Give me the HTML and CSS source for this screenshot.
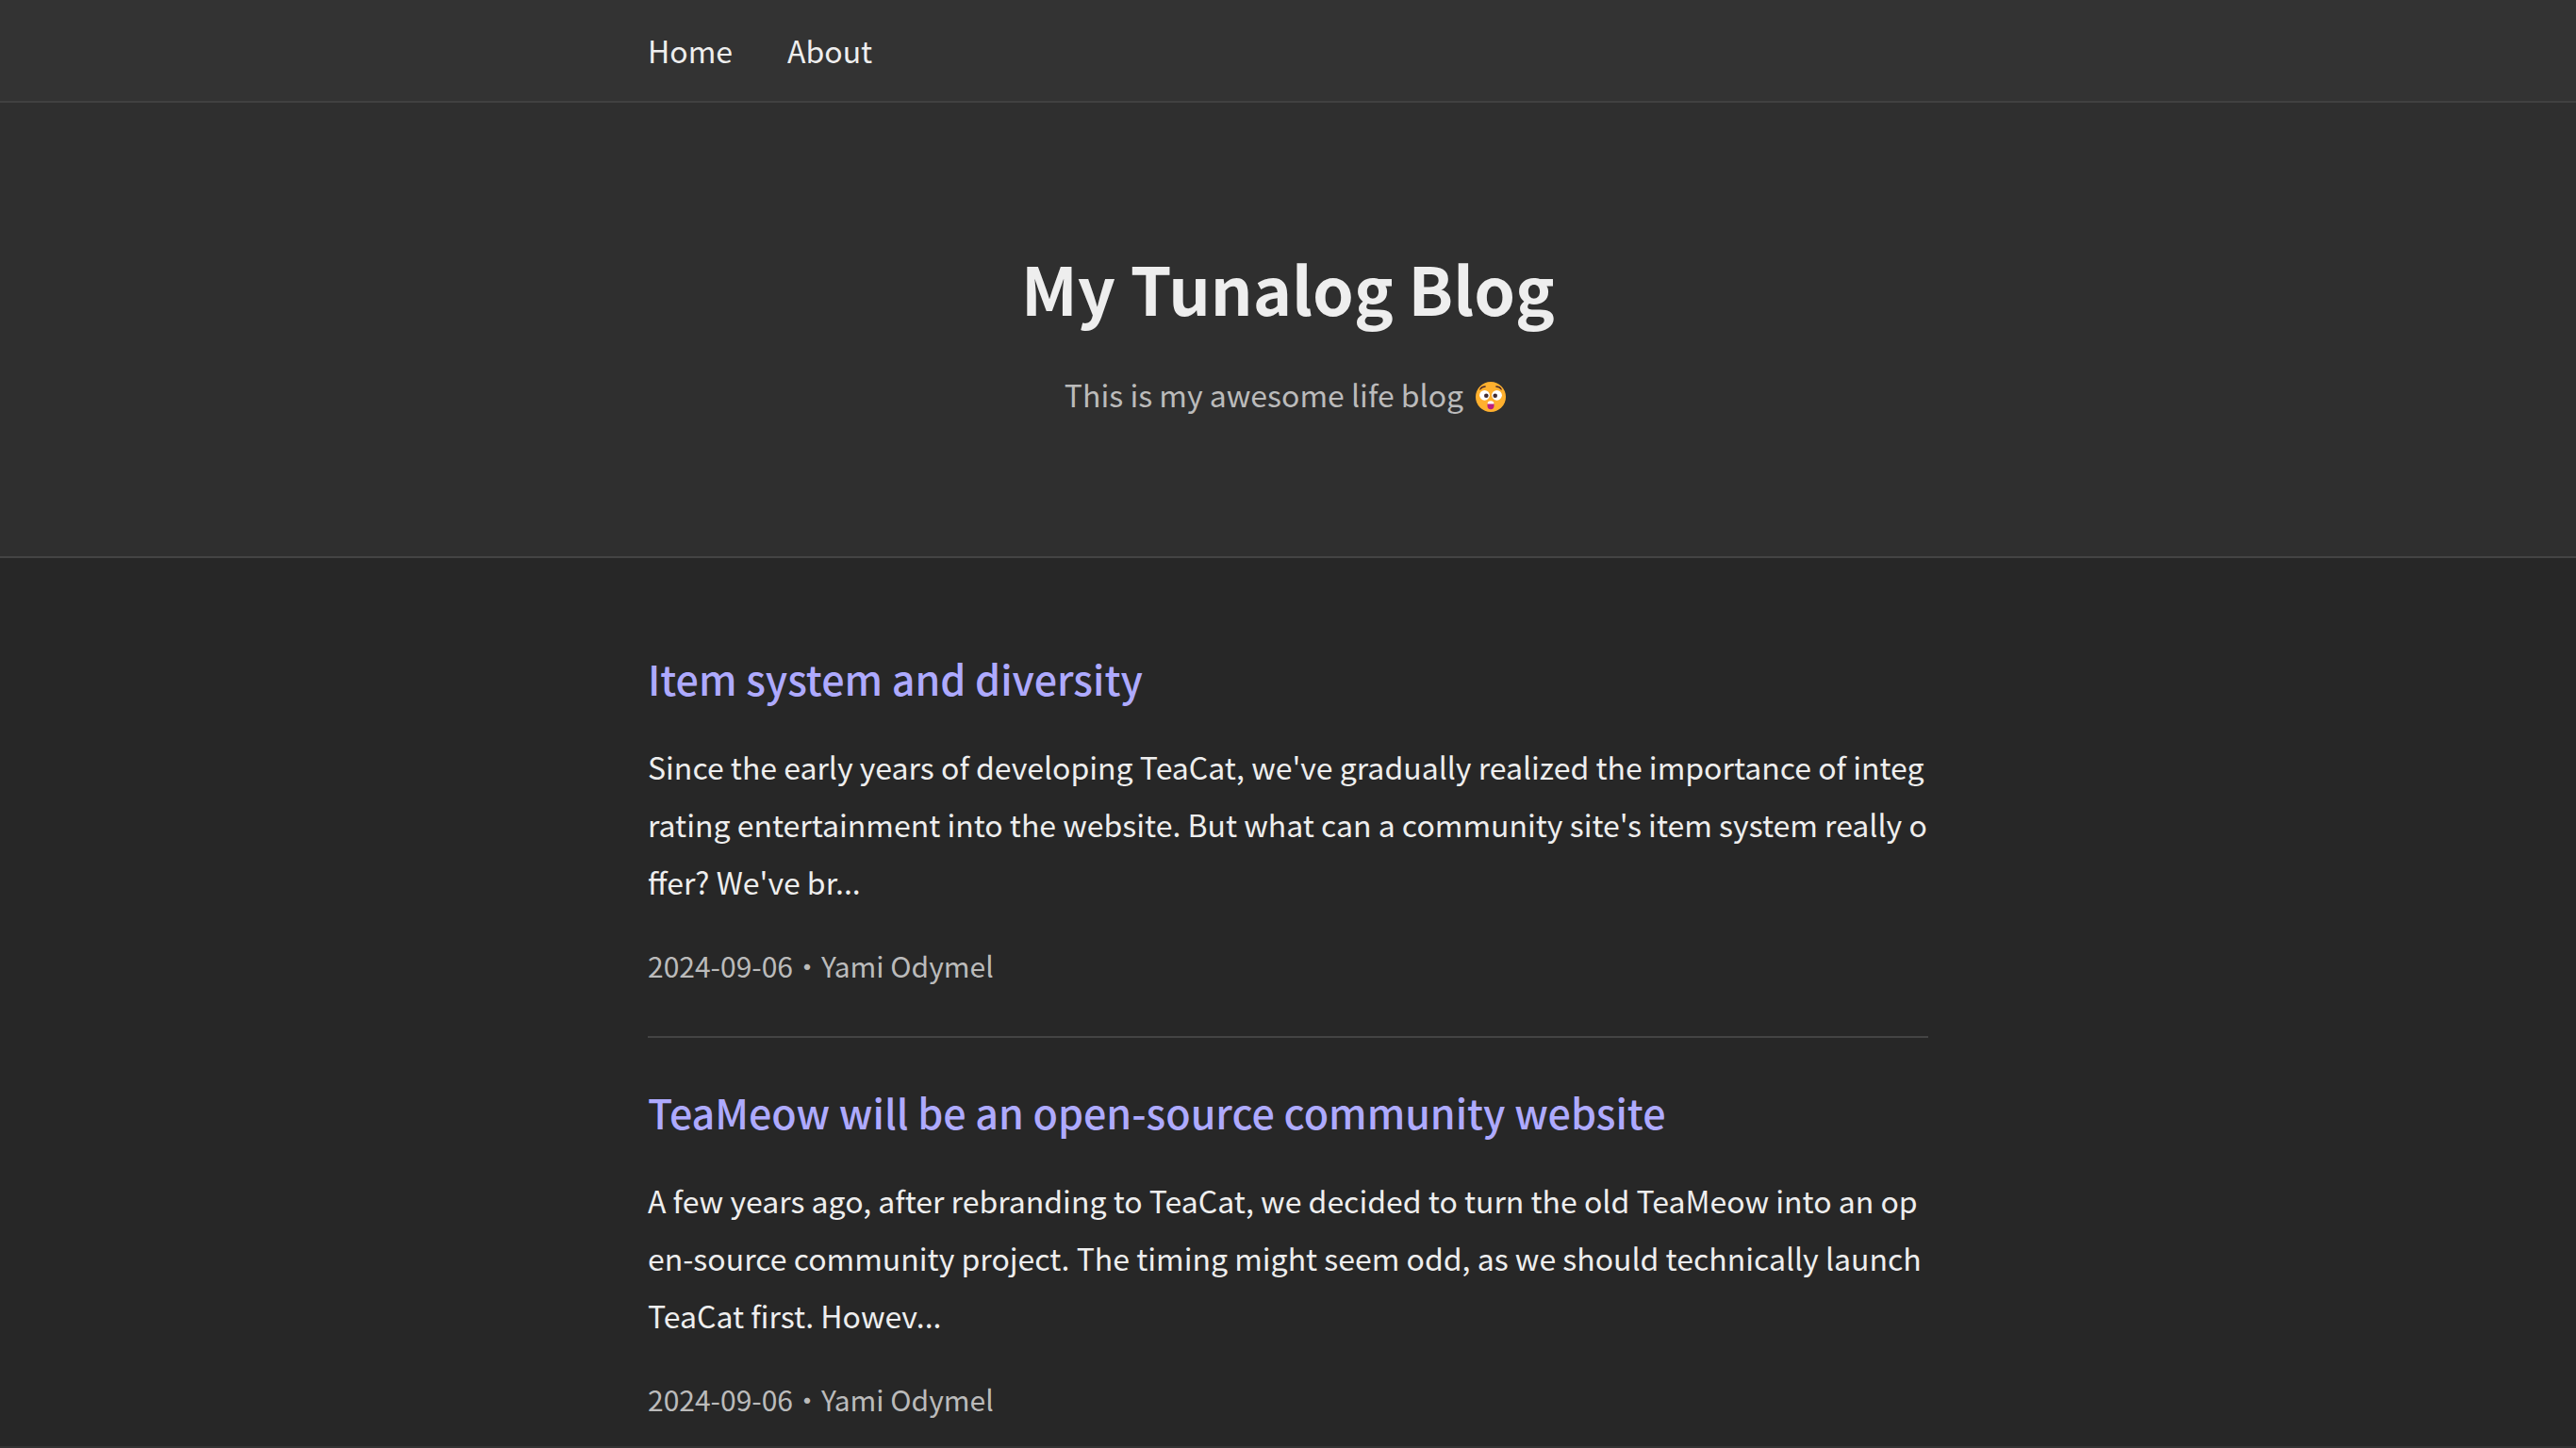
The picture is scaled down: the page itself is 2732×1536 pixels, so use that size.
FILE: index.html
```html
<!DOCTYPE html>
<html lang="en">
<head>
<meta charset="utf-8">
<meta name="viewport" content="width=device-width, initial-scale=1">
<title>My Tunalog Blog</title>
<link rel="stylesheet" href="styles.css">
</head>
<body>
<nav class="nav">
  <div class="container nav-links">
    <a class="nav-link" href="#">Home</a>
    <a class="nav-link" href="#about">About</a>
  </div>
</nav>
<header class="hero">
  <h1 class="hero-title">My Tunalog Blog</h1>
  <p class="hero-text">
    <span>This is my awesome life blog</span>
    <svg class="emoji" viewBox="0 0 32 32" role="img" aria-label="Flushed face">
      <circle cx="16" cy="16" r="16" fill="#ffb02e"/>
      <path d="M4.800 8C6 6 8 5 10.200 5M27.200 8C26 6 24 5 21.800 5" fill="none" stroke="#4a2b2b" stroke-width="1.300" stroke-linecap="round"/>
      <circle cx="9.500" cy="14.300" r="5.400" fill="#fff"/>
      <circle cx="22.500" cy="14.300" r="5.400" fill="#fff"/>
      <circle cx="11.300" cy="14.800" r="2.300" fill="#402a32"/>
      <circle cx="20.700" cy="14.800" r="2.300" fill="#402a32"/>
      <path d="M12.500 23H19.500V26Q19 29.300 16 29.300T12.500 26Z" fill="#bb1d80"/>
      <path d="M12.500 23.500Q12.700 20.300 16 20.300T19.500 23.500Z" fill="#fff"/>
    </svg>
  </p>
</header>
<main class="container posts">
  <article class="post">
    <h2 class="post-title"><a class="post-link" href="#item-system">Item system and diversity</a></h2>
    <p class="post-excerpt">Since the early years of developing TeaCat, we've gradually realized the importance of integrating entertainment into the website. But what can a community site's item system really offer? We've br...</p>
    <p class="post-meta">2024-09-06・Yami Odymel</p>
  </article>
  <article class="post">
    <h2 class="post-title"><a class="post-link" href="#open-source">TeaMeow will be an open-source community website</a></h2>
    <p class="post-excerpt">A few years ago, after rebranding to TeaCat, we decided to turn the old TeaMeow into an open-source community project. The timing might seem odd, as we should technically launch TeaCat first. Howev...</p>
    <p class="post-meta">2024-09-06・Yami Odymel</p>
  </article>
</main>
<footer class="footer"></footer>
</body>
</html>
```
FILE: styles.css
```css
* {
  box-sizing: border-box;
}

body {
  margin: 0;
  background: #272727;
  color: #eee;
  font-family: "Noto Sans CJK TC", "Noto Sans", sans-serif;
  font-size: 32px;
  line-height: 61px;
}

h1, h2, p {
  margin: 0;
}

a {
  color: inherit;
  text-decoration: none;
}

.container {
  max-width: 1358px;
  margin: 0 auto;
}

.nav {
  padding: 23px 0;
  background: #333;
  border-bottom: 2px solid #414141;
}

.nav-links {
  display: flex;
  gap: 58px;
}

.hero {
  padding: 144px 0 141px;
  background: #2f2f2f;
  border-bottom: 2px solid #444;
  text-align: center;
}

.hero-title {
  font-size: 70px;
  font-weight: 700;
  line-height: 104px;
}

.hero-text {
  display: flex;
  justify-content: center;
  align-items: center;
  gap: 13px;
  margin-top: 31px;
  padding-right: 6px;
  color: #bbb;
}

.emoji {
  width: 32px;
  height: 32px;
  margin-top: 4px;
}

.posts {
  padding: 49px 0 23px;
}

.post {
  padding: 42px 0 48px;
}

.post + .post {
  border-top: 2px solid #444;
}

.post:last-child {
  padding-bottom: 0;
}

.post-title {
  font-size: 43px;
  font-weight: 500;
  line-height: 72px;
}

.post-link {
  color: #aeaaff;
}

.post-excerpt {
  margin-top: 28px;
  word-break: break-all;
}

.post-meta {
  margin-top: 31px;
  color: #bbb;
  font-size: 30px;
  line-height: 54px;
}

.footer {
  border-top: 2px solid #333;
}
```
